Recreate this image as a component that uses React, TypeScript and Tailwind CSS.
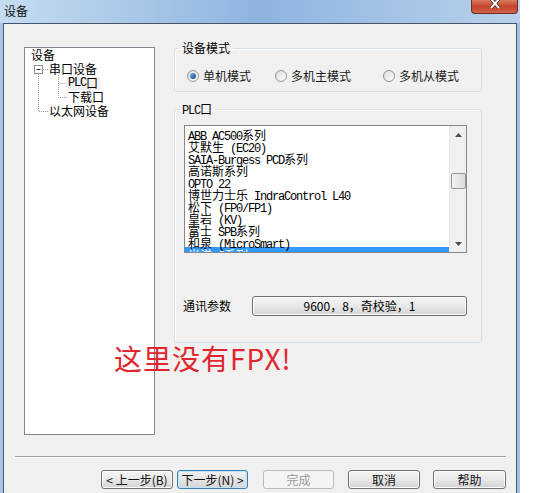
const CJK = /[\u3000-\u9fff\uff00-\uffef]/;

const Mixed = ({ text }: { text: string }) => (
  <>
    {text
      .split(/([\u3000-\u9fff\uff00-\uffef]+)/)
      .filter((p) => p !== "")
      .map((p, i) =>
        CJK.test(p) ? (
          <span key={i} className="font-['Noto_Sans_CJK_SC',sans-serif] text-[12px]">
            {p}
          </span>
        ) : (
          <span key={i} className="font-['Liberation_Mono',monospace] text-[12px] tracking-[-1.2px] whitespace-pre">
            {p}
          </span>
        )
      )}
  </>
);

const plcList = [
  "ABB AC500系列",
  "艾默生 (EC20)",
  "SAIA-Burgess PCD系列",
  "高诺斯系列",
  "OPTO 22",
  "博世力士乐 IndraControl L40",
  "松下 (FP0/FP1)",
  "皇岩 (KV)",
  "富士 SPB系列",
  "和泉 (MicroSmart)",
  "光洋 S系列",
];

const Radio = ({ checked, label }: { checked?: boolean; label: string }) => (
  <div className="flex items-center gap-[4px]">
    <div className="w-[12px] h-[12px] rounded-full border border-[#929292] bg-gradient-to-br from-[#dcdcdc] to-[#ffffff] flex items-center justify-center">
      {checked && (
        <div className="w-[6px] h-[6px] rounded-full bg-gradient-to-br from-[#6fb1e6] to-[#0d4f8c]"></div>
      )}
    </div>
    <span className="text-[12px] leading-[14px] text-[#1a1a1a]">{label}</span>
  </div>
);

const WinButton = ({
  label,
  width,
  disabled,
  focused,
}: {
  label: string;
  width: string;
  disabled?: boolean;
  focused?: boolean;
}) => (
  <div
    className={
      width +
      " h-[19px] rounded-[3px] border flex items-center justify-center text-[12px] leading-none " +
      (disabled
        ? "border-[#b8bcbf] bg-[#f4f4f4] text-[#9a9a9a]"
        : focused
        ? "border-[#3c7fb1] bg-gradient-to-b from-[#f2f2f2] to-[#d6d6d6] text-[#111] shadow-[inset_0_0_0_1px_#bfe3f7]"
        : "border-[#707070] bg-gradient-to-b from-[#f4f4f4] via-[#e8e8e8] to-[#d2d2d2] text-[#111] shadow-[inset_0_0_0_1px_#fcfcfc]")
    }
  >
    {label}
  </div>
);

export default function App() {
  return (
    <div className="w-[536px] h-[493px] bg-white overflow-hidden relative font-['Noto_Sans_CJK_SC',sans-serif] text-black">
      <div className="w-[520px] h-full flex flex-col bg-gradient-to-r from-[#a9c5e6] via-[#8db3de] to-[#a5c2e4]">
        {/* Title bar */}
        <div className="h-[23px] flex items-start justify-between bg-gradient-to-r from-[#c6dcf1] via-[#8eb4df] to-[#b9d1eb]">
          <span className="ml-[4px] mt-[3px] text-[12px] leading-[16px] text-[#111]">设备</span>
          <div className="mr-[2px] w-[47px] h-[14px] rounded-b-[4px] border border-t-0 border-[#6b3123] bg-gradient-to-b from-[#d77a61] via-[#c4432b] to-[#d2644a] flex items-start justify-center">
            <svg width="12" height="9" viewBox="0 0 12 9">
              <path d="M2 -1 L10 8 M10 -1 L2 8" stroke="#3b1a12" strokeWidth="3.2" />
              <path d="M2 -1 L10 8 M10 -1 L2 8" stroke="#ffffff" strokeWidth="2" />
            </svg>
          </div>
        </div>

        {/* Client area */}
        <div className="flex-1 mx-[3px] border border-b-0 border-[#43566e] bg-[#f0f0f0] relative">
          <div className="flex items-start pt-[17px] pl-[20px]">
            {/* Tree */}
            <div className="mt-[6px] w-[131px] h-[388px] border border-[#828790] bg-white relative text-[12px]">
              <svg className="absolute left-0 top-0" width="129" height="80">
                <g stroke="#9a9a9a" strokeWidth="1" strokeDasharray="1 1" fill="none">
                  <path d="M13.5 26 V63.5 H23" />
                  <path d="M18 21.5 H24" />
                  <path d="M33.5 27 V49.5 H42 M33.5 35.5 H42" />
                </g>
                <rect x="9.5" y="17.5" width="8" height="8" fill="#fff" stroke="#8e8f8f" />
                <path d="M11.5 21.5 H15.5" stroke="#2b2b2b" />
              </svg>
              <div className="relative flex flex-col">
                <div className="h-[14px] pl-[6px] leading-[14px]">设备</div>
                <div className="h-[14px] pl-[24px] leading-[14px]">串口设备</div>
                <div className="h-[14px] pl-[41px] flex items-center">
                  <span className="px-[2px] h-[13px] bg-[#efefef] flex items-center">
                    <Mixed text="PLC口" />
                  </span>
                </div>
                <div className="h-[14px] pl-[43px] leading-[14px]">下载口</div>
                <div className="h-[14px] pl-[24px] leading-[14px]">以太网设备</div>
              </div>
            </div>

            {/* Right side */}
            <div className="ml-[19px] w-[308px] flex flex-col">
              <fieldset className="h-[51px] border border-[#d5dfe5] rounded-[3px] shadow-[inset_1px_1px_0_#ffffff]">
                <legend className="ml-[4px] px-[3px] text-[12px] leading-[14px]">设备模式</legend>
                <div className="pt-[14px] pl-[12px] flex items-center">
                  <div className="w-[88px]">
                    <Radio checked label="单机模式" />
                  </div>
                  <div className="w-[108px]">
                    <Radio label="多机主模式" />
                  </div>
                  <Radio label="多机从模式" />
                </div>
              </fieldset>

              <fieldset className="mt-[8px] h-[243px] border border-[#d5dfe5] rounded-[3px] shadow-[inset_1px_1px_0_#ffffff]">
                <legend className="ml-[4px] px-[3px] leading-[14px]">
                  <Mixed text="PLC口" />
                </legend>
                <div className="mt-[7px] ml-[9px] w-[283px] h-[128px] border border-[#828790] bg-white flex">
                  <div className="flex-1 overflow-hidden pt-[1px] pl-[3px]">
                    {plcList.map((t, i) => (
                      <div
                        key={t}
                        className={
                          "h-[12px] leading-[12px] whitespace-nowrap " +
                          (i === plcList.length - 1 ? "bg-[#3399ff] text-white -ml-[3px] pl-[3px]" : "text-black")
                        }
                      >
                        <Mixed text={t} />
                      </div>
                    ))}
                  </div>
                  {/* Scrollbar */}
                  <div className="w-[17px] h-full bg-[#f0f0f0] border-l border-[#e6e6e6] flex flex-col items-center">
                    <div className="h-[17px] w-full flex items-center justify-center">
                      <svg width="7" height="4" viewBox="0 0 7 4">
                        <path d="M0 4 L3.5 0 L7 4 Z" fill="#4d4d4d" />
                      </svg>
                    </div>
                    <div className="mt-[30px] w-[15px] h-[16px] rounded-[2px] border border-[#979797] bg-gradient-to-r from-[#f3f3f3] to-[#dadada]"></div>
                    <div className="flex-1"></div>
                    <div className="h-[17px] w-full flex items-center justify-center">
                      <svg width="7" height="4" viewBox="0 0 7 4">
                        <path d="M0 0 L7 0 L3.5 4 Z" fill="#4d4d4d" />
                      </svg>
                    </div>
                  </div>
                </div>

                <div className="mt-[43px] ml-[8px] flex items-center">
                  <span className="w-[69px] text-[12px] leading-[14px]">通讯参数</span>
                  <div className="w-[215px] h-[20px] rounded-[3px] border border-[#707070] bg-gradient-to-b from-[#f4f4f4] via-[#e9e9e9] to-[#d3d3d3] shadow-[inset_0_0_0_1px_#fcfcfc] flex items-center justify-center text-[12px] leading-none">
                    9600，8，奇校验，1
                  </div>
                </div>
              </fieldset>
            </div>
          </div>

          {/* Separator */}
          <div className="mt-[21px] ml-[11px] w-[491px] h-[2px] border-t border-[#a0a0a0] bg-white"></div>

          {/* Buttons */}
          <div className="mt-[12px] ml-[97px] flex items-center">
            <WinButton width="w-[72px]" label="< 上一步(B)" />
            <div className="ml-[4px]">
              <WinButton width="w-[71px]" focused label="下一步(N) >" />
            </div>
            <div className="ml-[15px]">
              <WinButton width="w-[71px]" disabled label="完成" />
            </div>
            <div className="ml-[14px]">
              <WinButton width="w-[72px]" label="取消" />
            </div>
            <div className="ml-[13px]">
              <WinButton width="w-[73px]" label="帮助" />
            </div>
          </div>
        </div>
      </div>

      {/* Annotation */}
      <div className="absolute left-[114px] top-[343px] text-[28px] leading-[30px] tracking-[1px] text-[#e0262e] font-['Noto_Sans_CJK_SC',sans-serif]">
        这里没有FPX!
      </div>
    </div>
  );
}
